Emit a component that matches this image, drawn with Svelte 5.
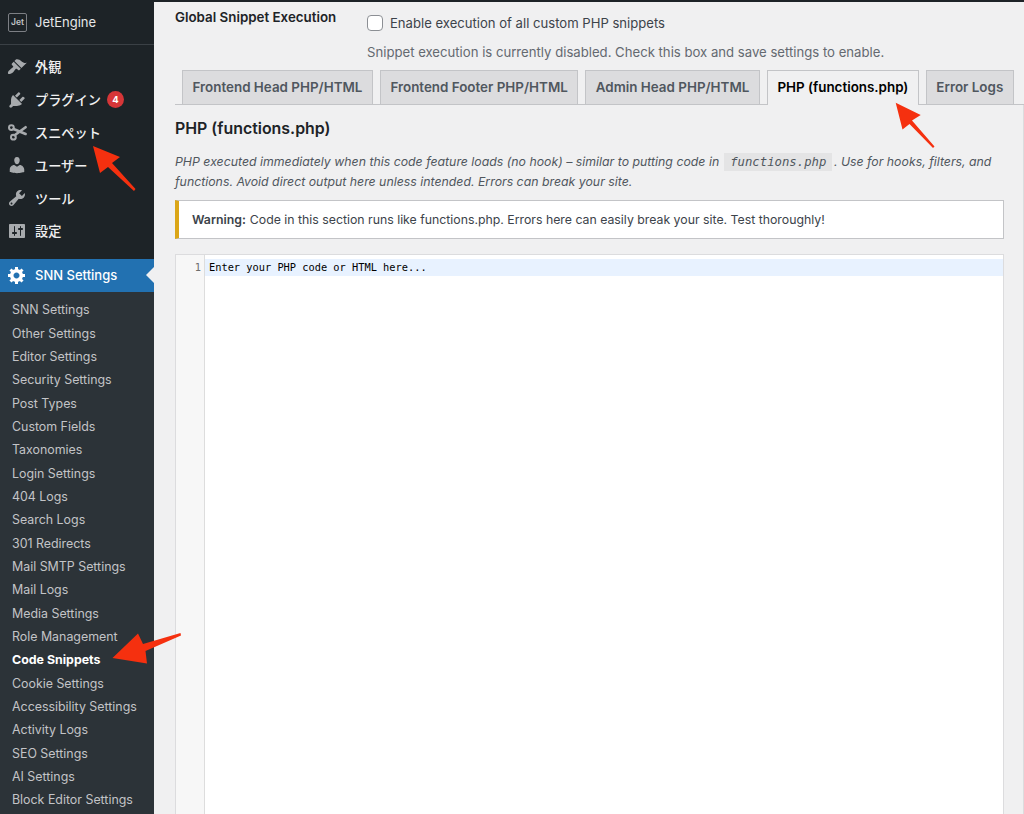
<script>
  const menu = [
    { label: '外観', d: 'M14.48 11.06L7.41 3.99l1.5-1.5c.5-.56 2.3-.47 3.51.32 1.21.8 1.43 1.28 2.91 2.1 1.18.64 2.45 1.26 4.45.85zm-.71.71L6.7 4.7 4.93 6.47c-.39.39-.39 1.02 0 1.41l1.06 1.06c.39.39.39 1.03 0 1.42-.6.6-1.43 1.11-2.21 1.69-.35.26-.7.53-1.01.84C1.43 13.23.4 16.07 1.14 16.86c.79.74 3.63-.29 4.97-1.63.31-.31.58-.66.84-1.01.58-.78 1.09-1.61 1.69-2.21.39-.39 1.03-.39 1.42 0l1.06 1.06c.39.39 1.02.39 1.41 0z' },
    { label: 'プラグイン', badge: '4', d: 'M13.11 4.36L9.87 7.6 8 5.73l3.24-3.24c.35-.34 1.05-.2 1.56.32.52.51.66 1.21.31 1.55zm-8 1.77l.91-1.12 9.01 9.01-1.19.84c-.71.71-2.63 1.16-3.82 1.16H6.14L4.9 17.26c-.59.59-1.54.59-2.12 0-.59-.58-.59-1.53 0-2.12l1.24-1.24v-3.88c0-1.13.4-3.19 1.09-3.89zm7.26 3.97l3.24-3.24c.34-.35 1.04-.21 1.55.31.52.51.66 1.21.31 1.55l-3.24 3.25z' },
    { label: 'スニペット', scissors: true },
    { label: 'ユーザー', d: 'M10 9.25c-2.27 0-2.73-3.44-2.73-3.44C7 4.02 7.82 2 9.97 2c2.16 0 2.98 2.02 2.71 3.81 0 0-.41 3.44-2.68 3.44zm0 2.57L12.72 10c2.39 0 4.52 2.33 4.52 4.53v2.49s-3.65 1.13-7.24 1.13c-3.65 0-7.24-1.13-7.24-1.13v-2.49c0-2.25 1.94-4.48 4.47-4.48z' },
    { label: 'ツール', d: 'M16.68 9.77c-1.34 1.34-3.3 1.67-4.95.99l-5.41 6.52c-.99.99-2.59.99-3.58 0s-.99-2.59 0-3.57l6.52-5.42c-.68-1.65-.35-3.61.99-4.95 1.28-1.28 3.12-1.62 4.72-1.06l-2.89 2.89 2.82 2.82 2.86-2.87c.53 1.58.18 3.39-1.08 4.65zM3.81 16.21c.4.39 1.04.39 1.43 0 .4-.4.4-1.04 0-1.43-.39-.4-1.03-.4-1.43 0-.39.39-.39 1.03 0 1.43z' },
    { label: '設定', d: 'M18 16V4c0-.55-.45-1-1-1H3c-.55 0-1 .45-1 1v12c0 .55.45 1 1 1h14c.55 0 1-.45 1-1zM8 11h1c.55 0 1 .45 1 1s-.45 1-1 1H8v1.5c0 .28-.22.5-.5.5s-.5-.22-.5-.5V13H6c-.55 0-1-.45-1-1s.45-1 1-1h1V5.5c0-.28.22-.5.5-.5s.5.22.5.5V11zm5-2h-1c-.55 0-1-.45-1-1s.45-1 1-1h1V5.5c0-.28.22-.5.5-.5s.5.22.5.5V7h1c.55 0 1 .45 1 1s-.45 1-1 1h-1v5.5c0 .28-.22.5-.5.5s-.5-.22-.5-.5V9z' }
  ];
  const sub = ['SNN Settings','Other Settings','Editor Settings','Security Settings','Post Types','Custom Fields','Taxonomies','Login Settings','404 Logs','Search Logs','301 Redirects','Mail SMTP Settings','Mail Logs','Media Settings','Role Management','Code Snippets','Cookie Settings','Accessibility Settings','Activity Logs','SEO Settings','AI Settings','Block Editor Settings'];
  const tabs = ['Frontend Head PHP/HTML','Frontend Footer PHP/HTML','Admin Head PHP/HTML','PHP (functions.php)','Error Logs'];
  const gear = 'M18 12h-2.18c-.17.7-.44 1.35-.81 1.93l1.54 1.54-2.1 2.1-1.54-1.54c-.58.36-1.23.63-1.91.79V19H8v-2.18c-.68-.16-1.33-.43-1.91-.79l-1.54 1.54-2.12-2.12 1.54-1.54c-.36-.58-.63-1.23-.79-1.91H1V9.03h2.17c.16-.7.44-1.35.8-1.94L2.43 5.55l2.1-2.1 1.54 1.54c.58-.37 1.24-.64 1.93-.81V2h3v2.18c.68.16 1.33.43 1.91.79l1.54-1.54 2.12 2.12-1.54 1.54c.36.59.64 1.24.8 1.94H18V12zm-8.5 1.5c1.66 0 3-1.34 3-3s-1.34-3-3-3-3 1.34-3 3 1.34 3 3 3z';
</script>

<div class="page">
  <aside class="side">
    <div class="brand">
      <span class="logo">Jet</span>
      <span class="brand-name">JetEngine</span>
    </div>
    <nav class="menu">
      {#each menu as m}
        <div class="item">
          <svg class="ico" viewBox="0 0 20 20" aria-hidden="true">
            {#if m.scissors}
              <g fill="none" stroke="#a7aaad" stroke-linecap="round">
                <circle cx="4.4" cy="5.6" r="2.4" stroke-width="2"/>
                <circle cx="6.4" cy="15.2" r="2.4" stroke-width="2"/>
                <path d="M6.6 7 L18.6 12" stroke-width="2.6"/>
                <path d="M7.6 13.2 L18.6 5.2" stroke-width="2.6"/>
              </g>
            {:else}
              <path d={m.d} fill="#a7aaad"/>
            {/if}
          </svg>
          <span class="label">{m.label}</span>
          {#if m.badge}<span class="badge">{m.badge}</span>{/if}
        </div>
      {/each}
    </nav>
    <div class="current">
      <svg class="ico gear" viewBox="0 0 20 20" aria-hidden="true"><path d={gear} fill="#fff"/></svg>
      <span>SNN Settings</span>
      <span class="pointer"></span>
    </div>
    <ul class="sub">
      {#each sub as s}
        <li class:on={s === 'Code Snippets'}>{s}</li>
      {/each}
    </ul>
  </aside>

  <main class="main">
    <div class="global">
      <div class="g-label">Global Snippet Execution</div>
      <div class="g-field">
        <label class="check"><span class="box"></span>Enable execution of all custom PHP snippets</label>
        <p class="g-desc">Snippet execution is currently disabled. Check this box and save settings to enable.</p>
      </div>
    </div>

    <div class="tabs">
      {#each tabs as t}
        <div class="tab" class:active={t === 'PHP (functions.php)'}>{t}</div>
      {/each}
    </div>

    <section class="panel">
      <h2>PHP (functions.php)</h2>
      <p class="desc">PHP executed immediately when this code feature loads (no hook) – similar to putting code in <code>functions.php</code>. Use for hooks, filters, and functions. Avoid direct output here unless intended. Errors can break your site.</p>
      <div class="notice"><strong>Warning:</strong> Code in this section runs like functions.php. Errors here can easily break your site. Test thoroughly!</div>
      <div class="editor">
        <div class="gutter"><span>1</span></div>
        <div class="lines"><div class="line">Enter your PHP code or HTML here...</div></div>
      </div>
    </section>
  </main>

  <svg class="arrows" viewBox="0 0 1024 814" aria-hidden="true">
    <path fill="#f5300f" d="M93 146 L120 157 L112 163 L135.5 189 L134 191 L108 167 L100 173 Z"/>
    <path fill="#f5300f" d="M895.7 102.7 L920.7 115 L912 120.5 L934.5 146.5 L933 148 L909.5 124 L902.5 129.5 Z"/>
    <path fill="#f5300f" d="M112.5 658 L138 633.5 L143 644 L180.5 633 L181 635.5 L145.5 651 L147 663.5 Z"/>
  </svg>
</div>

<style>
  :global(body) { margin: 0; background: #f0f0f1; }
  .page {
    position: relative;
    display: flex;
    width: 1024px;
    height: 814px;
    overflow: hidden;
    background: #f0f0f1;
    font-family: Inter, "Noto Sans CJK JP", sans-serif;
    color: #3c434a;
    border-top: 2px solid #1d2327;
    box-sizing: border-box;
  }
  .side {
    width: 154px;
    flex: none;
    background: #1d2327;
    color: #f0f0f1;
    margin-top: -2px;
  }
  .brand {
    display: flex;
    align-items: center;
    gap: 8px;
    height: 45px;
    padding-left: 8px;
    box-sizing: border-box;
    border-bottom: 1px solid #3a4045;
  }
  .logo {
    display: flex;
    align-items: center;
    justify-content: center;
    width: 17px;
    height: 17px;
    border: 1px solid #7c7f84;
    border-radius: 2px;
    font-size: 8.5px;
    font-weight: 600;
    line-height: 1;
    color: #c3c4c7;
  }
  .brand-name { font-size: 13px; color: #e6e7e8; }
  .menu { padding-top: 5.5px; }
  .item {
    display: flex;
    align-items: center;
    height: 32.8px;
    padding-left: 7px;
    font-size: 13.2px;
    font-family: "Noto Sans CJK JP", Inter, sans-serif;
    font-weight: 500;
  }
  .ico { width: 20px; height: 20px; flex: none; }
  .label { margin-left: 8px; white-space: nowrap; }
  .badge {
    display: flex;
    align-items: center;
    justify-content: center;
    width: 17px;
    height: 17px;
    margin-left: 6px;
    border-radius: 50%;
    background: #d63638;
    color: #fff;
    font-family: Inter, sans-serif;
    font-size: 9.5px;
    font-weight: 700;
  }
  .current {
    position: relative;
    display: flex;
    align-items: center;
    gap: 8px;
    height: 33px;
    margin-top: 11.5px;
    padding-left: 7px;
    background: #2271b1;
    color: #fff;
    font-size: 13px;
    font-weight: 500;
  }
  .pointer {
    position: absolute;
    right: 0;
    top: 8px;
    border: 8px solid transparent;
    border-left-width: 0;
    border-right-color: #f0f0f1;
  }
  .sub {
    list-style: none;
    margin: 0;
    padding: 6.5px 0 0 12px;
    background: #2c3338;
    height: 600px;
  }
  .sub li {
    height: 23.33px;
    line-height: 23.33px;
    font-size: 12.4px;
    color: #c3c4c7;
    white-space: nowrap;
  }
  .sub li.on { color: #fff; font-weight: 700; }
  .main { flex: 1; min-width: 0; padding-left: 21px; }
  .global { display: flex; height: 68px; }
  .g-label {
    width: 192px;
    flex: none;
    padding-top: 7px;
    font-size: 13.35px;
    font-weight: 600;
    line-height: 17px;
    color: #1d2327;
  }
  .check {
    display: flex;
    align-items: center;
    height: 16px;
    margin-top: 13px;
    gap: 7px;
    font-size: 13.1px;
    color: #3c434a;
  }
  .box {
    width: 14px;
    height: 14px;
    border: 1px solid #8c8f94;
    border-radius: 4px;
    background: #fff;
    flex: none;
  }
  .g-desc {
    margin: 13px 0 0;
    font-size: 13.15px;
    line-height: 17px;
    color: #646970;
  }
  .tabs {
    display: flex;
    gap: 7px;
    height: 35px;
    padding-left: 7px;
    box-sizing: border-box;
    border-bottom: 1px solid #c3c4c7;
  }
  .tab {
    display: flex;
    align-items: center;
    height: 34px;
    padding: 0 9.5px 2px;
    box-sizing: border-box;
    background: #dcdcde;
    border: 1px solid #c3c4c7;
    border-bottom: 0;
    font-size: 13.4px;
    font-weight: 600;
    color: #50575e;
    white-space: nowrap;
  }
  .tab.active {
    height: 35px;
    padding-bottom: 3px;
    background: #f0f0f1;
    color: #000;
  }
  .panel {
    height: 720px;
    padding: 14px 19px 0 0;
    border-right: 1px solid #dcdcde;
  }
  h2 {
    margin: 0;
    font-size: 15.9px;
    line-height: 20px;
    font-weight: 600;
    color: #1d2327;
  }
  .desc {
    margin: 13px 0 0;
    font-size: 12.32px;
    line-height: 19px;
    font-style: italic;
    color: #50575e;
  }
  code {
    font-family: "DejaVu Sans Mono", monospace;
    font-size: 12.3px;
    background: #e4e4e5;
    padding: 2px 6px;
    margin: 0 1.5px;
  }
  .notice {
    display: flex;
    gap: 4px;
    align-items: center;
    height: 39px;
    margin-top: 9px;
    padding-left: 13px;
    box-sizing: border-box;
    background: #fff;
    border: 1px solid #c3c4c7;
    border-left: 4px solid #dba617;
    font-size: 12.3px;
    color: #3c434a;
    white-space: nowrap;
  }
  .notice strong { font-weight: 600; }
  .editor {
    display: flex;
    height: 600px;
    margin-top: 15px;
    background: #fff;
    border: 1px solid #dcdcde;
    box-sizing: border-box;
    font-family: "DejaVu Sans Mono", monospace;
    font-size: 10.34px;
    line-height: 17px;
    color: #000;
  }
  .gutter {
    width: 29px;
    flex: none;
    box-sizing: border-box;
    padding: 4px 3px 0 0;
    text-align: right;
    background: #f7f7f7;
    border-right: 1px solid #ddd;
    color: #6d6d6d;
  }
  .lines { flex: 1; padding-top: 4px; }
  .line { height: 17px; background: #e8f2ff; padding-left: 4px; }
  .arrows {
    position: absolute;
    left: 0;
    top: -2px;
    width: 1024px;
    height: 814px;
    pointer-events: none;
  }
</style>
